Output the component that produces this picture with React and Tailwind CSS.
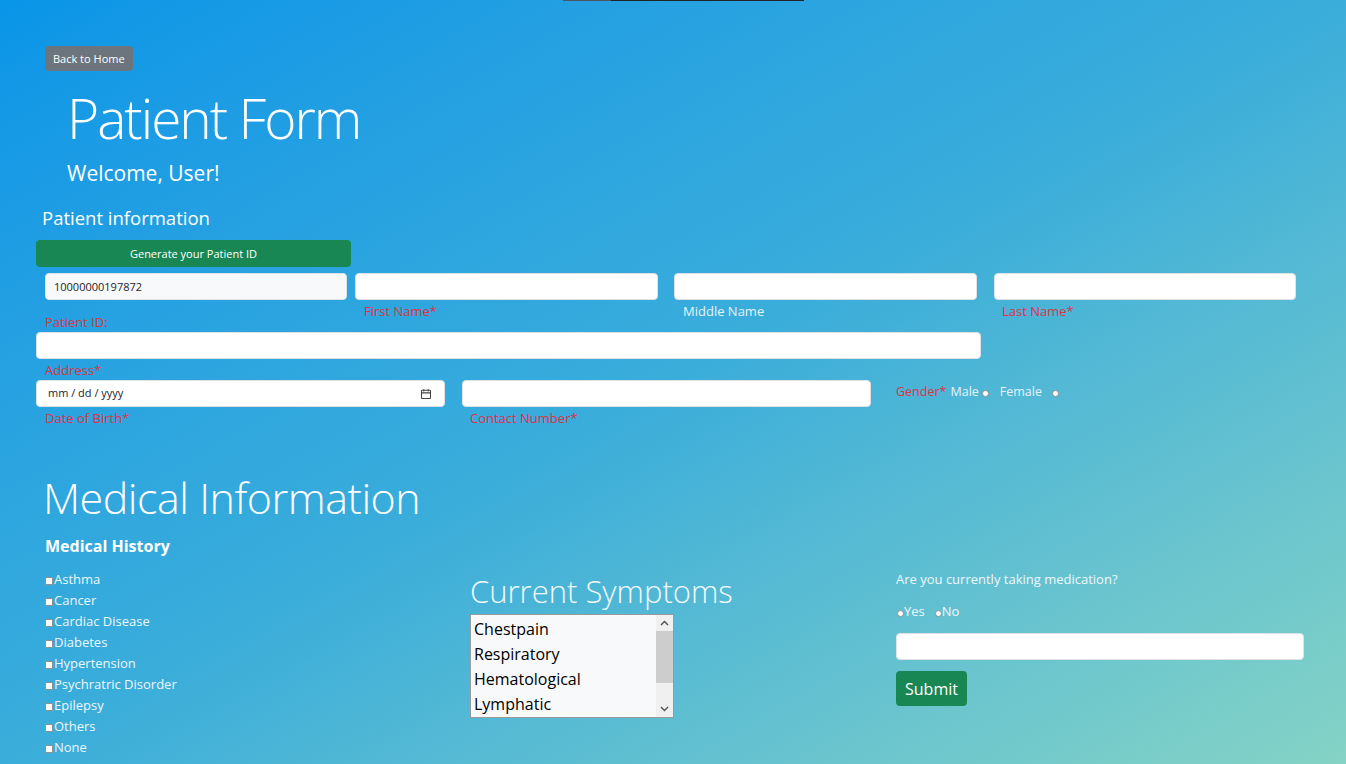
import React from 'react';

const history = [
  'Asthma',
  'Cancer',
  'Cardiac Disease',
  'Diabetes',
  'Hypertension',
  'Psychratric Disorder',
  'Epilepsy',
  'Others',
  'None',
];

const symptoms = ['Chestpain', 'Respiratory', 'Hematological', 'Lymphatic'];

const fieldCls =
  'block h-[27px] rounded-[4px] border border-[#dee2e6] px-2 text-[11px] text-[#212529] outline-none';
const inputCls = `${fieldCls} bg-white`;

function Radio() {
  return (
    <span className="inline-block h-[7px] w-[7px] rounded-full border border-[#8f8f8f] bg-white align-[-1px]" />
  );
}

function Check() {
  return (
    <span className="mr-px inline-block h-[8px] w-[8px] rounded-[1px] border border-[#8f8f8f] bg-white align-[-1px]" />
  );
}

export default function App() {
  return (
    <div
      className="min-h-[764px] w-full overflow-hidden bg-gradient-to-br from-[#0895e8] via-[#3aadda] to-[#84d3c5] text-white"
      style={{ fontFamily: '"Open Sans", "Noto Sans", sans-serif' }}
    >
      {/* remnant of the nav bar at the very top */}
      <div className="flex h-px">
        <div className="ml-[563px] w-[48px] bg-[#4b5563]" />
        <div className="w-[193px] bg-[#212529]" />
      </div>

      <div className="pl-[36px]">
        <button className="ml-[9px] mt-[45px] h-[25px] rounded-[4px] bg-[#6c757d] px-[8px] pt-px text-[11px] text-white">
          Back to Home
        </button>

        <h1 className="ml-[31px] mt-[11px] text-[55px] font-light leading-[72px] tracking-[-2px]">Patient Form</h1>
        <p className="ml-[31px] mt-[6px] text-[21px] leading-[26px]">Welcome, User!</p>

        <h2 className="ml-[6px] mt-[20px] text-[18.5px] leading-[24px]">Patient information</h2>

        <button className="mt-[10px] h-[27px] w-[315px] rounded-[4px] bg-[#198754] pt-px text-[11px] text-white">
          Generate your Patient ID
        </button>

        {/* name row */}
        <div className="mt-[6px] flex h-[59px] items-start">
          <div className="w-[311px] pl-[9px]">
            <input className={`${fieldCls} w-[302px] bg-[#f8f9fa]`} defaultValue="10000000197872" readOnly />
            <div className="mt-[14px] text-[13px] leading-[16px] text-[#dc3545]">Patient ID:</div>
          </div>
          <div className="ml-[8px] w-[303px]">
            <input className={`${inputCls} w-[303px]`} />
            <div className="ml-[9px] mt-[3px] text-[13px] leading-[16px] text-[#dc3545]">First Name*</div>
          </div>
          <div className="ml-[16px] w-[303px]">
            <input className={`${inputCls} w-[303px]`} />
            <div className="ml-[9px] mt-[3px] text-[13px] leading-[16px] text-[#e6f3fa]">Middle Name</div>
          </div>
          <div className="ml-[17px] w-[302px]">
            <input className={`${inputCls} w-[302px]`} />
            <div className="ml-[8px] mt-[3px] text-[13px] leading-[16px] text-[#dc3545]">Last Name*</div>
          </div>
        </div>

        {/* address */}
        <div className="h-[48px]">
          <input className={`${inputCls} w-[945px]`} />
          <div className="ml-[9px] mt-[3px] text-[13px] leading-[16px] text-[#dc3545]">Address*</div>
        </div>

        {/* dob / contact / gender */}
        <div className="flex h-[46px] items-start">
          <div className="w-[409px]">
            <div className={`${inputCls} flex w-[409px] items-center justify-between pl-[11px] pr-[12px]`}>
              <span className="text-[11px] text-[#212529]">mm / dd / yyyy</span>
              <svg width="12" height="12" viewBox="0 0 16 16" fill="none" stroke="#444" strokeWidth="1.4">
                <rect x="2" y="3" width="12" height="11" rx="1" />
                <path d="M2 6.5h12M5 1.5v3M11 1.5v3" />
              </svg>
            </div>
            <div className="ml-[9px] mt-[3px] text-[13px] leading-[16px] text-[#dc3545]">Date of Birth*</div>
          </div>
          <div className="ml-[17px] w-[409px]">
            <input className={`${inputCls} w-[409px]`} />
            <div className="ml-[8px] mt-[3px] text-[13px] leading-[16px] text-[#dc3545]">Contact Number*</div>
          </div>
          <div className="ml-[25px] flex h-[25px] items-center text-[12.5px]">
            <span className="text-[#dc3545]">Gender*</span>
            <span className="ml-[4px] text-[#e6f3fa]">Male</span>
            <span className="ml-[3px]"><Radio /></span>
            <span className="ml-[11px] text-[#e6f3fa]">Female</span>
            <span className="ml-[10px]"><Radio /></span>
          </div>
        </div>

        <h2 className="ml-[7px] mt-[45px] text-[43px] font-light leading-[54px] tracking-[-0.5px]">Medical Information</h2>
        <h3 className="ml-[9px] mt-[11px] text-[16px] font-bold leading-[20px]">Medical History</h3>

        {/* medical row */}
        <div className="mt-[13px] flex items-start">
          <ul className="ml-[9px] w-[425px]">
            {history.map((h) => (
              <li key={h} className="text-[13px] leading-[21px] text-[#eef7fb]">
                <Check />
                {h}
              </li>
            ))}
          </ul>

          <div className="w-[426px]">
            <h3 className="mt-[2px] text-[31px] font-light leading-[40px] text-[#f2f9fc]">Current Symptoms</h3>
            <div className="mt-[3px] flex h-[104px] w-[204px] border border-[#9a9a9a] bg-[#f8f9fa]">
              <ul className="flex-1 pl-[3px] pt-[2px]">
                {symptoms.map((s) => (
                  <li key={s} className="text-[16px] leading-[25px] text-black">
                    {s}
                  </li>
                ))}
              </ul>
              <div className="flex w-[17px] flex-col bg-[#f0f0f0]">
                <div className="flex h-[16px] items-center justify-center">
                  <svg width="9" height="6" viewBox="0 0 9 6" fill="none" stroke="#505050" strokeWidth="1.4">
                    <path d="M1 5l3.5-3.5L8 5" />
                  </svg>
                </div>
                <div className="h-[52px] bg-[#cdcdcd]" />
                <div className="flex-1" />
                <div className="flex h-[16px] items-center justify-center">
                  <svg width="9" height="6" viewBox="0 0 9 6" fill="none" stroke="#505050" strokeWidth="1.4">
                    <path d="M1 1l3.5 3.5L8 1" />
                  </svg>
                </div>
              </div>
            </div>
          </div>

          <div className="w-[408px]">
            <p className="text-[13px] leading-[21px] text-[#eef7fb]">Are you currently taking medication?</p>
            <div className="mt-[11px] flex items-center text-[13px] leading-[21px] text-[#eef7fb]">
              <span className="ml-px"><Radio /></span>
              <span>Yes</span>
              <span className="ml-[10px]"><Radio /></span>
              <span>No</span>
            </div>
            <input className={`${inputCls} mt-[11px] w-[408px]`} />
            <button className="mt-[11px] h-[35px] rounded-[4px] bg-[#198754] px-[9px] text-[16px] text-white">
              Submit
            </button>
          </div>
        </div>
      </div>
    </div>
  );
}
